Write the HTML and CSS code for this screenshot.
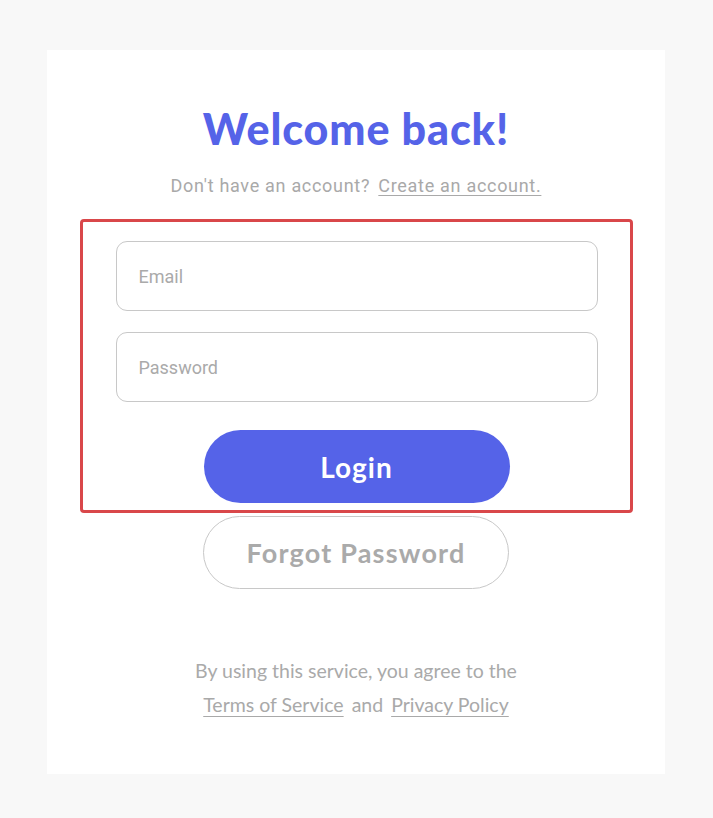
FILE: index.html
```html
<!DOCTYPE html>
<html lang="en">
<head>
<meta charset="utf-8">
<title>Welcome back</title>
<link rel="stylesheet" href="styles.css">
</head>
<body>
<main class="page">
  <section class="card">
    <h1 class="title">Welcome back!</h1>
    <p class="subtitle">Don't have an account? <a href="#" class="link">Create an account.</a></p>
    <form class="frame">
      <input class="field" type="email" placeholder="Email">
      <input class="field" type="password" placeholder="Password">
      <button class="btn btn-primary" type="button">Login</button>
    </form>
    <button class="btn btn-outline" type="button">Forgot Password</button>
    <p class="legal">By using this service, you agree to the<br><a href="#" class="link">Terms of Service</a> and <a href="#" class="link">Privacy Policy</a></p>
  </section>
</main>
</body>
</html>
```

FILE: styles.css
```css
* { box-sizing: border-box; }
html, body { margin: 0; padding: 0; }
body {
  background: #f8f8f8;
  width: 713px;
  height: 818px;
  overflow: hidden;
}
.page {
  padding: 50px 0 0 47px;
}
.card {
  width: 618px;
  height: 724px;
  background: #ffffff;
  display: flex;
  flex-direction: column;
  align-items: center;
}
.title {
  margin: 49px 0 0;
  font-family: "Lato", sans-serif;
  font-weight: 900;
  font-size: 43px;
  letter-spacing: 0.9px;
  line-height: 60px;
  color: #5563e8;
}
.subtitle {
  margin: 15px 0 0;
  font-family: "Roboto", sans-serif;
  font-size: 18px;
  letter-spacing: 0.7px;
  line-height: 24px;
  color: #a9a9a9;
}
.link {
  color: #a9a9a9;
  text-decoration: underline;
  text-underline-offset: 3px;
  margin-left: 3px;
}
.frame {
  margin-top: 21px;
  width: 553px;
  border: 3px solid #d9474a;
  border-radius: 4px;
  padding: 19px 32px 7px 33px;
  display: flex;
  flex-direction: column;
  align-items: center;
}
.field {
  width: 482px;
  height: 70px;
  border: 1px solid #c8c8c8;
  border-radius: 11px;
  padding: 0 22px;
  font-family: "Roboto", sans-serif;
  font-size: 18px;
  color: #555;
  background: #fff;
  outline: none;
}
.field + .field { margin-top: 21px; }
.field::placeholder { color: #aaaaaa; }
.btn {
  width: 306px;
  height: 73px;
  border-radius: 37px;
  font-family: "Lato", sans-serif;
  font-weight: 700;
  cursor: pointer;
}
.btn-primary {
  margin-top: 28px;
  background: #5563e8;
  border: none;
  color: #ffffff;
  font-size: 28px;
  letter-spacing: 1px;
}
.btn-outline {
  margin-top: 3px;
  background: #ffffff;
  border: 1px solid #c8c8c8;
  color: #aaaaaa;
  font-size: 27px;
  letter-spacing: 1.2px;
}
.legal {
  margin: 65px 0 0;
  font-family: "Lato", sans-serif;
  font-size: 19.5px;
  line-height: 34px;
  color: #aaaaaa;
  text-align: center;
}
.legal .link { margin: 0 3px; text-underline-offset: 4px; }
```
